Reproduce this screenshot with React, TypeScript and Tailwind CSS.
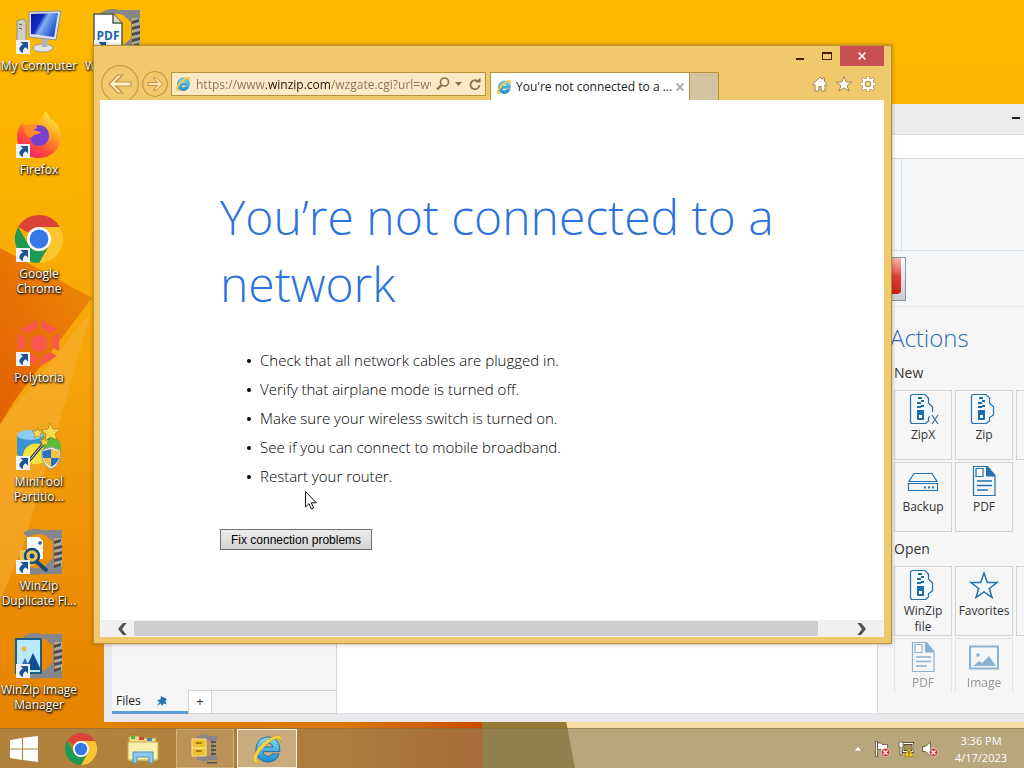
import { useState } from 'react'
import type { ReactNode } from 'react'

/* ------------- logos and glyphs ------------- */

function IeLogo({ className }: { className?: string }) {
  return (
    <svg viewBox="0 0 32 32" className={className} aria-hidden="true">
      <defs>
        <linearGradient id="ieBlue" x1="0" y1="0" x2="0" y2="1">
          <stop offset="0" stopColor="#7fdcf7" />
          <stop offset="1" stopColor="#1c8fd0" />
        </linearGradient>
      </defs>
      <path
        d="M17 4C9.500 4 5 9.500 5 17s5 12 12 12c5.500 0 9.500-3 11-8h-7c-.8 1.500-2.200 2.300-4 2.300-3 0-4.800-2-4.900-4.700H28.700C29.600 10 24.500 4 17 4Zm-4.800 10c.4-2.600 2.200-4.300 4.800-4.300s4.400 1.700 4.700 4.300Z"
        fill="url(#ieBlue)" stroke="#1a6fa8" strokeWidth="1"
      />
      <path
        d="M4.500 29.500C-1 27 5 15.500 14 8.500 21 3 28.500.5 30 4c.6 1.400.2 3.500-.7 5.500.2-2.500-.2-3.700-1.800-4-3-.5-8.500 2.500-13.500 7.500C7 20 3.500 27 7 28.300c1 .4 2.300.2 3.700-.4-2.300 1.700-4.600 2.400-6.200 1.600Z"
        fill="#f8d342" stroke="#c99a18" strokeWidth=".5"
      />
    </svg>
  )
}

function ChromeLogo({ className }: { className?: string }) {
  return (
    <svg viewBox="0 0 48 48" className={className} aria-hidden="true">
      <path d="M3.200 12A24 24 0 0 1 44.800 12H24A12 12 0 0 0 13.600 18Z" fill="#db4437" />
      <path d="M44.800 12A24 24 0 0 1 24 48L34.400 30A12 12 0 0 0 24 12Z" fill="#fbc52d" />
      <path d="M24 48A24 24 0 0 1 3.200 12L13.600 30A12 12 0 0 0 34.400 30Z" fill="#1e9a55" />
      <circle cx="24" cy="24" r="12" fill="#fff" />
      <circle cx="24" cy="24" r="9.400" fill="#3579e8" />
    </svg>
  )
}

function ComputerIcon() {
  return (
    <svg viewBox="0 0 48 48" className="size-12" aria-hidden="true">
      <defs>
        <linearGradient id="screen" x1="0" y1="0" x2="1" y2=".5">
          <stop offset="0" stopColor="#0a1a9c" />
          <stop offset=".4" stopColor="#0f2cc0" />
          <stop offset=".55" stopColor="#7fb0f2" />
          <stop offset="1" stopColor="#1d4fc9" />
        </linearGradient>
      </defs>
      <path d="M2 14l5-2 4 2v22l-5 3-4-3Z" fill="#cfcfca" stroke="#8e8e88" />
      <path d="M4 17l3 1M4 21l3 1" stroke="#555" />
      <ellipse cx="28" cy="41" rx="10" ry="4" fill="#e4e4e4" stroke="#9a9a9a" />
      <path d="M26 30h8l-2 10h-5Z" fill="#b5b5b5" />
      <path d="M14 5l32-1-5 29-27-3Z" fill="#dfe2e8" stroke="#8b8f99" />
      <path d="M16 7l27-1-4 24-23-3Z" fill="url(#screen)" />
    </svg>
  )
}

function FirefoxIcon() {
  return (
    <svg viewBox="0 0 48 48" className="size-12" aria-hidden="true">
      <defs>
        <linearGradient id="fox" x1=".8" y1="0" x2=".2" y2="1">
          <stop offset="0" stopColor="#fff24a" />
          <stop offset=".35" stopColor="#ffa91f" />
          <stop offset=".7" stopColor="#ff4a3d" />
          <stop offset="1" stopColor="#e2177a" />
        </linearGradient>
      </defs>
      <path
        d="M30 0c3 3 5 6 6 9 2-1 3 0 4 2 4 4 6 10 6 15 0 12-10 21-22 21S2 38 2 26c0-6 2-11 6-15l1 5c1-1 3-2 5-2 5-1 8-2 11-5 2-3 4-6 5-9Z"
        fill="url(#fox)"
      />
      <path d="M15 20c2-5 8-7 13-5 4 2 6 6 6 10 0 6-5 10-10 10s-8-3-9-8Z" fill="#7a3fd3" />
      <path d="M9 15c4-2 9-2 13 1 1 1-2 2-4 3 3 1 7 1 8 3-2 1-6 1-8 3-2 3-6 1-7-2-2-2-2-5-2-8Z" fill="#ff8a2a" />
    </svg>
  )
}

function PolytoriaIcon() {
  return (
    <svg viewBox="0 0 48 48" className="size-12" aria-hidden="true" fill="#f9584e">
      <path d="M24 15l8 4v10l-8 5-8-5V19Z" />
      <path d="M22 1v8l-9 5-7-4ZM26 1l16 9-7 4-9-5ZM44 14v18l-7-4V18ZM42 37l-16 10v-9l9-5ZM22 47L6 37l7-4 9 5ZM3 32V14l7 4v10Z" />
    </svg>
  )
}

function MiniToolIcon() {
  return (
    <svg viewBox="0 0 48 48" className="size-12" aria-hidden="true">
      <path d="M2 13c0-7 27-9 27 0v17c0 6-27 7-27 0Z" fill="#3b93cf" />
      <ellipse cx="15" cy="12" rx="13" ry="5" fill="#8ecdf0" />
      <path d="M9 28c4-8 14-10 23-4l-2 14c-8 6-17 3-23-3Z" fill="#f1e33a" />
      <path d="M26 15c9-4 20 0 20 9v6l-18-4Z" fill="#5dbb3b" />
      <path d="M13 39L34 14" stroke="#27303c" strokeWidth="3" />
      <path d="M13 39L34 14" stroke="#d9e1ea" strokeWidth="1" />
      <path d="M35 0l3 6 7 0-5 5 2 6-6-3-6 4 1-7-5-4 7-1ZM23 5l1 3 4 0-3 3 1 4-3-2-4 2 1-4-3-3h4ZM30 14l1 3 3 0-2 2 1 3-3-1-3 2 0-4-2-2h3Z" fill="#f9d94d" stroke="#a8841a" strokeWidth=".7" />
      <path d="M36 24l9 3c1 10-2 16-9 19-7-3-10-9-9-19Z" fill="#f3f3ee" stroke="#8e9ba5" />
      <path d="M36 26v9h-8c-1-3-1-5 0-7ZM36 35h8c-1 4-4 7-8 9Z" fill="#2c6fc4" />
      <path d="M36 26l8 2v7h-8ZM28 35h8v9c-4-2-7-5-8-9Z" fill="#efc53c" />
    </svg>
  )
}

/* grey clamp with a zip strip, shared by all WinZip icons */
function ZipClamp({ children }: { children?: ReactNode }) {
  return (
    <svg viewBox="0 0 48 48" className="size-12" aria-hidden="true">
      <path d="M8 6c5-4 12-5 18-3h21v8h-8v28h8v8H26c-6 2-13 0-18-3l5-5c6 3 12 3 17 0l8-8V15l-8-7c-5-2-11-1-17 2Z" fill="#85878b" />
      <path d="M40 11h7v29h-7Z" fill="#a9abad" />
      <path d="M39 14l7-2v3l-7 2ZM39 20l8-2v3l-8 2ZM39 26l8-2v3l-8 2ZM39 32l8-2v3l-8 2ZM39 38l7-2v3l-7 2Z" fill="#4b4d50" />
      {children}
    </svg>
  )
}

function PdfIcon() {
  return (
    <ZipClamp>
      <path d="M1 7h19l9 9v31H1Z" fill="#fff" stroke="#555b50" strokeWidth="1.500" />
      <path d="M20 7v9h9" fill="#d9dccf" stroke="#555b50" strokeWidth="1.500" />
      <text x="15" y="33" textAnchor="middle" fontSize="12" fontWeight="700" fill="#1a67a8" fontFamily="Open Sans, sans-serif">PDF</text>
    </ZipClamp>
  )
}

function DuplicateIcon() {
  return (
    <ZipClamp>
      <path d="M5 23h14v16H5Z" fill="#e3bf5a" />
      <path d="M12 10h12l4 4v18H12Z" fill="#f8fafc" />
      <circle cx="25" cy="16" r="1.800" fill="#1c5c96" />
      <circle cx="17" cy="29" r="7" fill="#e7c15a" stroke="#174a7c" strokeWidth="2.500" />
      <circle cx="17" cy="29" r="2.500" fill="#174a7c" />
      <path d="M22 35l9 8" stroke="#174a7c" strokeWidth="4" strokeLinecap="round" />
    </ZipClamp>
  )
}

function ImageManagerIcon() {
  return (
    <ZipClamp>
      <path d="M1 8h25v34H1Z" fill="#b9e9fb" stroke="#1b5d85" strokeWidth="2" />
      <circle cx="9" cy="18" r="2.500" fill="#f3b24a" />
      <path d="M10 39l8-17 8 17Z" fill="#0f4f93" />
      <path d="M4 39l6-12 6 12Z" fill="#3768b3" />
    </ZipClamp>
  )
}

function ZipFileGlyph({ x }: { x?: boolean }) {
  return (
    <svg viewBox="0 0 32 32" className="size-8" aria-hidden="true">
      <path d="M3.500 4c0-1.500.5-2.500 2-2.500H18l3.500 3.500v5l4 4v8l-4 2.500v3.500l-3 2.500H5.500c-1.500 0-2-.8-2-2.500Z" fill="#f7fafc" stroke="#2471ad" strokeWidth="1.200" />
      <path d="M11 4h4v2h-4ZM14 7h3v2h-3ZM10 9h4v2h-4ZM14 12h3v2h-3ZM10 13h4v2h-4Z" fill="#1c6dac" />
      <path d="M10 17h7v10h-7Zm2 5v3h3v-3Z" fill="#1c6dac" fillRule="evenodd" />
      {x && (
        <>
          <path d="M23 19h9v13h-9Z" fill="#f6f6f7" />
          <path d="M25 22l6 9M31 22l-6 9" stroke="#3b6f9b" strokeWidth="1.200" />
        </>
      )}
    </svg>
  )
}

function BackupGlyph() {
  return (
    <svg viewBox="0 0 32 32" className="size-8" fill="none" stroke="#2471ad" strokeWidth="1.200" aria-hidden="true">
      <path d="M7 8.500h18l5 8H2ZM1.500 18.500h29v7h-29Z" />
      <path d="M17 22.500h2M21 22.500h2M25 22.500h2" strokeWidth="2" />
    </svg>
  )
}

function DocGlyph() {
  return (
    <svg viewBox="0 0 32 32" className="size-8" aria-hidden="true">
      <path d="M5.500 1.500h14l7.500 9v20H5.500Z" fill="none" stroke="#2471ad" strokeWidth="1.200" />
      <path d="M8 3.500h7v8H8Z" fill="#fff" stroke="#2471ad" strokeWidth="1.200" />
      <path d="M18 2h1.500l7.500 8.500v1h-9Z" fill="#2471ad" />
      <path d="M9 16h15M9 20.500h15M9 25h11" stroke="#2471ad" strokeWidth="1.600" />
    </svg>
  )
}

function StarGlyph() {
  return (
    <svg viewBox="0 0 32 32" className="size-8" fill="none" stroke="#2471ad" strokeWidth="1.500" aria-hidden="true">
      <path d="M16 4l3.300 9.500H29l-7.700 6L24 28.500 16 23l-8 5.500 2.700-9-7.700-6h9.700Z" />
    </svg>
  )
}

function ImageGlyph() {
  return (
    <svg viewBox="0 0 32 32" className="size-8" aria-hidden="true">
      <path d="M2 5.500h28v22H2Z" fill="none" stroke="#2471ad" strokeWidth="2" />
      <circle cx="10" cy="14" r="1.800" fill="#2471ad" />
      <path d="M5 25l6-5 3 2 7-7 7 10Z" fill="#2471ad" />
    </svg>
  )
}

/* ------------- desktop ------------- */

const shortcuts = [
  { label: 'My Computer', icon: <ComputerIcon /> },
  { label: 'Firefox', icon: <FirefoxIcon /> },
  { label: 'Google Chrome', icon: <ChromeLogo className="size-12" /> },
  { label: 'Polytoria', icon: <PolytoriaIcon /> },
  { label: 'MiniTool Partitio...', icon: <MiniToolIcon /> },
  { label: 'WinZip Duplicate Fi...', icon: <DuplicateIcon /> },
  { label: 'WinZip Image Manager', icon: <ImageManagerIcon /> },
]

function Shortcut({ label, icon }: { label: string; icon: ReactNode }) {
  return (
    <button type="button" className="flex h-[104px] w-[78px] flex-col items-center pt-[7px] text-[12px] leading-[15px] text-white">
      <span className="relative">
        {icon}
        <svg viewBox="0 0 14 14" className="absolute bottom-px left-px size-3.5" aria-hidden="true">
          <path d="M0 0h14v14H0Z" fill="#eef3f8" />
          <path d="M4.500 2H12v7.500L9.500 7.200C7.500 8.500 6.500 10 7 13 2 11 2.500 6.500 7 4.500Z" fill="#1f5294" />
        </svg>
      </span>
      <span className="mt-[3px] w-20 text-center [text-shadow:1px_1px_2px_#000,0_1px_2px_#000]">{label}</span>
    </button>
  )
}

function Wallpaper() {
  return (
    <svg viewBox="0 0 1024 768" preserveAspectRatio="none" className="absolute inset-0 h-full w-full" aria-hidden="true">
      <defs>
        <linearGradient id="sky" x1="0" y1="0" x2="0" y2="1">
          <stop offset="0" stopColor="#fdba00" />
          <stop offset=".25" stopColor="#fcb100" />
          <stop offset=".5" stopColor="#f5a20c" />
          <stop offset=".75" stopColor="#ec8f03" />
          <stop offset="1" stopColor="#e28000" />
        </linearGradient>
        <linearGradient id="facet" x1="1" y1="0" x2="0" y2="1">
          <stop offset="0" stopColor="#ee8a08" />
          <stop offset="1" stopColor="#e26000" />
        </linearGradient>
        <linearGradient id="ridge" x1="0" y1="0" x2="1" y2="0">
          <stop offset="0" stopColor="#e28000" />
          <stop offset=".6" stopColor="#dc7800" />
          <stop offset="1" stopColor="#cc4c00" />
        </linearGradient>
      </defs>
      <path d="M0 0h1024v768H0Z" fill="url(#sky)" />
      <path d="M0 248l92 50L15 400 0 424Z" fill="url(#facet)" />
      <path d="M92 310L22 550 0 600V425Z" fill="#f8b23a" opacity=".5" />
      <path d="M112 700h370v68H112Z" fill="url(#ridge)" />
      <path d="M482 700h82l11 68h-93Z" fill="#977a32" />
      <path d="M562 700h462v68H575Z" fill="#f7dca6" />
    </svg>
  )
}

/* ------------- WinZip, behind the browser ------------- */

function Tile({ label, icon, faded }: { label?: string; icon?: ReactNode; faded?: boolean }) {
  return (
    <button
      type="button"
      className={`flex h-[70px] w-[58px] shrink-0 flex-col items-center border border-[#d2d3d5] pt-0.5 text-[12px] leading-4 text-[#333] ${faded ? 'opacity-50' : ''}`}
    >
      {icon}
      <span className="mt-0.5">{label}</span>
    </button>
  )
}

function WinZipWindow() {
  return (
    <section aria-label="WinZip" className="absolute top-[104px] right-0 bottom-1.5 left-[104px] flex flex-col overflow-hidden bg-[#ebe8ec] pb-2 pl-2">
      <div className="-ml-2 flex h-[30px] shrink-0 items-start justify-end bg-[#ececec]">
        <button type="button" aria-label="Minimize WinZip" className="flex h-7 w-4 items-center justify-center">
          <span className="h-0.5 w-2 bg-[#222]" />
        </button>
      </div>
      <div className="h-[25px] shrink-0 border-y border-[#d9dbde] bg-white" />
      <div className="flex h-[92px] shrink-0 justify-end border-b border-[#dcdfe3] bg-[#f4f6f8]">
        <div className="w-[123px] border-l border-[#dcdfe3]" />
      </div>
      <div className="flex h-14 shrink-0 items-start justify-end border-b border-[#e9e9ea] bg-[#f5f6f7] pt-1.5 pr-[118px]">
        <div className="flex h-[44px] w-8 justify-end border border-[#8f9296] bg-linear-to-b from-white to-[#c9cbce] pr-1">
          <div className="h-9 w-6 rounded-br-sm bg-linear-to-b from-[#f3b9b6] via-[#e0403a] to-[#c9201c]" />
        </div>
      </div>

      <div className="flex min-h-0 flex-1">
        <div className="flex w-[225px] flex-col justify-end border-r border-[#d2d3d5] bg-[#f5f5f6]">
          <div className="flex h-6 text-[12px] text-[#222]">
            <button type="button" className="flex w-[76px] items-center gap-4 border-b-3 border-[#5b9bd5] pl-1">
              Files
              <svg viewBox="0 0 12 12" className="size-2.5" aria-hidden="true">
                <path d="M4.500 0L12 3.500l-2 2.500 1.500 4L8 9 6 12 4.500 9 0 12l3-4.500L0 5l4.500-1Z" fill="#1f77b4" />
              </svg>
            </button>
            <button type="button" aria-label="Add pane" className="w-6 border border-[#d2d3d5] bg-white text-center">+</button>
            <div className="flex-1 border-y border-[#d2d3d5]" />
          </div>
        </div>
        <div className="flex-1 border-b border-[#dcdfe3] bg-white" />
        <div className="w-[147px] overflow-hidden border-b border-l border-[#d9dbde] bg-[#f6f6f7] pt-3">
          <h2 className="pl-3 text-[24px] leading-[38px] text-[#2f6db5] font-light">Actions</h2>
          <div className="h-[336px] overflow-hidden pt-1.5 pl-4">
            <h3 className="h-[27px] text-[14px] leading-[20px] font-medium text-[#333]">New</h3>
            <div className="flex flex-col gap-0.5">
              <div className="flex gap-[3px]">
                <Tile label="ZipX" icon={<ZipFileGlyph x />} />
                <Tile label="Zip" icon={<ZipFileGlyph />} />
                <Tile />
              </div>
              <div className="flex gap-[3px]">
                <Tile label="Backup" icon={<BackupGlyph />} />
                <Tile label="PDF" icon={<DocGlyph />} />
              </div>
            </div>
            <h3 className="h-[34px] pt-[7px] text-[14px] leading-[20px] font-medium text-[#333]">Open</h3>
            <div className="flex flex-col gap-0.5">
              <div className="flex gap-[3px]">
                <Tile label="WinZip file" icon={<ZipFileGlyph />} />
                <Tile label="Favorites" icon={<StarGlyph />} />
                <Tile />
              </div>
              <div className="flex gap-[3px]">
                <Tile label="PDF" icon={<DocGlyph />} faded />
                <Tile label="Image" icon={<ImageGlyph />} faded />
              </div>
            </div>
          </div>
        </div>
      </div>
    </section>
  )
}

/* ------------- Internet Explorer ------------- */

const tips = [
  'Check that all network cables are plugged in.',
  'Verify that airplane mode is turned off.',
  'Make sure your wireless switch is turned on.',
  'See if you can connect to mobile broadband.',
  'Restart your router.',
]

function BrowserWindow() {
  const [url, setUrl] = useState('https://www.winzip.com/wzgate.cgi?url=www.winzip.com')

  return (
    <section
      aria-label="Internet Explorer"
      className="absolute top-[45px] right-[132px] bottom-[84px] left-[93px] flex flex-col border border-[#b98f3c] bg-[#efc96c] pr-[7px] pb-1.5 pl-1.5 shadow-[0_0_4px_rgba(60,40,0,0.4)]"
    >
      {/* caption */}
      <div className="flex h-5 shrink-0 justify-end">
        <button type="button" aria-label="Minimize" className="flex w-[27px] items-center justify-center pt-1.5">
          <span className="h-0.5 w-2 bg-[#40200a]" />
        </button>
        <button type="button" aria-label="Maximize" className="flex w-[27px] items-center justify-center">
          <span className="h-2 w-2.5 border border-t-2 border-[#40200a]" />
        </button>
        <button type="button" aria-label="Close" className="flex w-11 items-center justify-center bg-[#c75050]">
          <svg viewBox="0 0 8 8" className="size-2" stroke="#fff" strokeWidth="1.500" aria-hidden="true">
            <path d="M.5.5l7 7M7.500.5l-7 7" />
          </svg>
        </button>
      </div>

      {/* navigation */}
      <div className="flex h-[34px] shrink-0 items-center pt-0.5 pl-px">
        <button type="button" aria-label="Back" className="size-[38px] shrink-0">
          <svg viewBox="0 0 38 38" className="size-[38px]" aria-hidden="true">
            <circle cx="19" cy="19" r="18.300" fill="none" stroke="#c79a3e" strokeWidth="1.200" />
            <path d="M8 19l9-9h4.500l-7 7H30v4H14.500l7 7H17Z" fill="#fff0d2" stroke="#c0903a" strokeWidth="1.200" />
          </svg>
        </button>
        <button type="button" aria-label="Forward" className="mx-[3px] size-[26px] shrink-0">
          <svg viewBox="0 0 26 26" className="size-[26px]" aria-hidden="true">
            <circle cx="13" cy="13" r="12.300" fill="none" stroke="#c79a3e" strokeWidth="1.200" />
            <path d="M20.500 13l-6 6h-3l4-4.500H6v-3h9.500l-4-4.500h3Z" fill="#fce5b8" stroke="#c0903a" />
          </svg>
        </button>
        <form className="flex h-6 min-w-0 flex-1 items-center border border-[#b9923f] bg-[#fde9c6] pl-[3px]" onSubmit={e => e.preventDefault()}>
          <IeLogo className="mr-[5px] size-4 shrink-0" />
          {/* the host part of the address is drawn darker than the rest */}
          <input
            aria-label="Address"
            value={url}
            onChange={e => setUrl(e.target.value)}
            className="min-w-0 flex-1 bg-[linear-gradient(90deg,#85745a_70px,#1c140a_70px,#1c140a_134px,#85745a_134px)] bg-clip-text pt-0.5 text-[12px] text-transparent outline-none"
          />
          <button type="button" aria-label="Search" className="ml-1 w-4">
            <svg viewBox="0 0 16 16" className="size-4" fill="none" stroke="#8a7048" strokeWidth="1.600" aria-hidden="true">
              <circle cx="9.500" cy="6" r="4" />
              <path d="M6.500 9L2 13.500" strokeWidth="2.400" />
            </svg>
          </button>
          <button type="button" aria-label="Show address list" className="flex w-4 justify-center">
            <svg viewBox="0 0 8 4" className="h-1 w-2" aria-hidden="true"><path d="M0 0h7L3.500 4Z" fill="#8a7048" /></svg>
          </button>
          <button type="button" aria-label="Refresh" className="mr-0.5 w-4">
            <svg viewBox="0 0 16 16" className="size-4" aria-hidden="true">
              <path d="M12.500 9A4.500 4.500 0 1 1 10.500 5" fill="none" stroke="#8a7048" strokeWidth="1.800" />
              <path d="M8.500 6.500h5v-5Z" fill="#8a7048" />
            </svg>
          </button>
        </form>
        <div className="ml-1 flex h-7 w-[200px] shrink-0 items-center self-end border border-b-0 border-[#b9923f] bg-white px-[5px]">
          <IeLogo className="mr-1 size-4 shrink-0" />
          <span className="flex-1 text-[12px] whitespace-nowrap text-[#222]">You're not connected to a ...</span>
          <button type="button" aria-label="Close tab" className="flex w-2 items-center justify-center">
            <svg viewBox="0 0 8 8" className="size-2" stroke="#a5a5a5" strokeWidth="1.800" aria-hidden="true">
              <path d="M.5.5l7 7M7.500.5l-7 7" />
            </svg>
          </button>
        </div>
        <button type="button" aria-label="New tab" className="h-7 w-[29px] shrink-0 self-end border border-b-0 border-l-0 border-[#b9923f] bg-[#d4c3a0]" />
        <div className="flex w-[165px] shrink-0 justify-end gap-2 pr-2 text-[#8d7140]">
          <button type="button" aria-label="Home">
            <svg viewBox="0 0 16 16" className="size-4" fill="#fffdf6" stroke="currentColor" strokeWidth=".8" aria-hidden="true">
              <path d="M8 1L.8 8.300 2 9.500l1-1V15h3.800v-4.500h2.400V15H13V8.500l1 1 1.200-1.200-2.700-2.800V2h-2v1.500Z" />
            </svg>
          </button>
          <button type="button" aria-label="Favorites">
            <svg viewBox="0 0 16 16" className="size-4" fill="#fffdf6" stroke="currentColor" strokeWidth=".8" aria-hidden="true">
              <path d="M8 .6l2 5.200 5.500.2-4.300 3.400 1.500 5.400L8 11.800l-4.700 3 1.500-5.400L.5 6 6 5.800Z" />
            </svg>
          </button>
          <button type="button" aria-label="Tools">
            <svg viewBox="0 0 16 16" className="size-4" aria-hidden="true">
              <path d="M8 0v16M0 8h16M2.300 2.300l11.400 11.400M13.700 2.300L2.300 13.700" stroke="#a5854a" strokeWidth="3.600" />
              <circle cx="8" cy="8" r="6" fill="#fffdf6" stroke="#a5854a" strokeWidth=".8" />
              <path d="M8 .5v15M.5 8h15M2.700 2.700l10.600 10.600M13.300 2.700L2.700 13.300" stroke="#fffdf6" strokeWidth="2.600" />
              <circle cx="8" cy="8" r="2.800" fill="#efc96c" stroke="#8d7140" strokeWidth=".8" />
              <circle cx="8" cy="8" r="1" fill="#fffdf6" />
            </svg>
          </button>
        </div>
      </div>

      {/* page */}
      <div className="relative flex min-h-0 flex-1 flex-col bg-white">
        <main className="min-h-0 flex-1 overflow-hidden pt-[83px] pl-[120px] text-black">
          <h1 className="max-w-[600px] text-[48px] leading-[67px] font-light text-[#2a72de]">You’re not connected to a network</h1>
          <ul className="mt-[29px] ml-[27px] text-[15px] leading-[29px] font-light">
            {tips.map(tip => (
              <li key={tip} className="flex items-center gap-[9px]">
                <span className="size-1 rounded-full bg-black" />
                {tip}
              </li>
            ))}
          </ul>
          <button
            type="button"
            className="mt-[38px] h-[21px] border border-[#707070] bg-linear-to-b from-[#ececec] to-[#d4d4d4] px-2.5 font-['Liberation_Sans',sans-serif] text-[12px] leading-none"
          >
            Fix connection problems
          </button>
        </main>
        <div className="flex h-[17px] shrink-0 items-center bg-[#f0f0f0]">
          <button type="button" aria-label="Scroll left" className="flex w-[34px] justify-center pl-2.5">
            <svg viewBox="0 0 10 12" className="h-3 w-2.5" aria-hidden="true"><path d="M6 0h3.500L5 6l4.500 6H6L1 6Z" fill="#4d5154" /></svg>
          </button>
          <div className="h-[15px] flex-1 bg-[#cdcdcd]" />
          <button type="button" aria-label="Scroll right" className="flex w-[66px] justify-center pl-[22px]">
            <svg viewBox="0 0 10 12" className="h-3 w-2.5" aria-hidden="true"><path d="M4 0H.5L5 6 .5 12H4l5-6Z" fill="#4d5154" /></svg>
          </button>
        </div>
      </div>
    </section>
  )
}

/* ------------- taskbar ------------- */

function RedCross() {
  return (
    <>
      <circle cx="11.500" cy="11.500" r="4.300" fill="#d6373a" stroke="#fff" strokeWidth=".6" />
      <path d="M9.500 9.500l4 4M13.500 9.500l-4 4" stroke="#fff" strokeWidth="1.400" />
    </>
  )
}

function Taskbar() {
  return (
    <footer className="relative flex h-10 shrink-0 items-stretch border-t border-[#8c6a34]/60 bg-[#8d8262]/60 text-white">
      <button type="button" aria-label="Start" className="flex w-12 items-center justify-center">
        <svg viewBox="0 0 28 26" className="h-[26px] w-7" fill="#fff" aria-hidden="true">
          <path d="M0 4l12-2v10.500H0ZM13 1.800L28 0v12.500H13ZM0 13.500h12V24L0 22ZM13 13.500h15V26l-15-2Z" />
        </svg>
      </button>
      <button type="button" aria-label="Google Chrome" className="flex w-[66px] items-center justify-center">
        <ChromeLogo className="size-8" />
      </button>
      <button type="button" aria-label="File Explorer" className="flex w-[58px] items-center justify-center">
        <svg viewBox="0 0 32 32" className="size-8" aria-hidden="true">
          <path d="M2 5c0-2 1-2 2-2h7l2 2h16v23H2Z" fill="#f3dc84" stroke="#b99a45" />
          <path d="M4 3h4v3H4Z" fill="#4caf50" />
          <path d="M12 4h5v3h-5Z" fill="#c94a35" />
          <path d="M20 5h5v3h-5Z" fill="#4a7fc0" />
          <path d="M1 9h30v18H1Z" fill="#fbefad" stroke="#c7a956" />
          <path d="M6 30V19h20v11h-4v-6H10v6Z" fill="#8cc9ec" stroke="#4b94c6" />
        </svg>
      </button>
      <button type="button" aria-label="WinZip" className="ml-1 flex w-[58px] items-center justify-center border border-[#ddc396]/60 bg-white/15">
        <svg viewBox="0 0 32 32" className="size-8" aria-hidden="true">
          <path d="M8 4c4-3 8-3 12-1h8v5h-3v15h3v4h-6c-5 2-10 2-14-1v-3h12l2-2V9l-3-2H8Z" fill="#8d8487" />
          <path d="M22 8h5v2h-5ZM22 12h5v2h-5ZM22 16h5v2h-5ZM22 20h5v2h-5ZM18 29h10v1.500H18Z" fill="#555" />
          <path d="M3 6h14v9H3ZM3 15h14v8H3Z" fill="#f0c033" stroke="#fbe48c" />
          <path d="M7 10h6M7 18h6" stroke="#8a6a10" strokeWidth="1.500" />
        </svg>
      </button>
      <button type="button" aria-label="Internet Explorer" className="ml-[3px] flex w-[60px] items-center justify-center border border-[#fdf3dd] bg-white/35">
        <IeLogo className="size-8" />
      </button>

      <div className="ml-auto flex items-center gap-2">
        <button type="button" aria-label="Show hidden icons" className="mr-1">
          <svg viewBox="0 0 8 5" className="h-[5px] w-2" aria-hidden="true"><path d="M4 0l4 5H0Z" fill="#fff" stroke="#6b5836" strokeWidth=".4" /></svg>
        </button>
        <button type="button" aria-label="Action Center">
          <svg viewBox="0 0 16 16" className="size-4" aria-hidden="true">
            <path d="M1.500.5h2v15h-2ZM3.500 2h4l1 1.500h5V10H8L7 8.500H3.500Z" fill="#fff" stroke="#5b4a2c" strokeWidth=".8" />
            <RedCross />
          </svg>
        </button>
        <button type="button" aria-label="Network">
          <svg viewBox="0 0 16 16" className="size-4" aria-hidden="true">
            <path d="M5 2.500h10v8H5Z" fill="#a8905c" stroke="#3d3320" strokeWidth="2.400" />
            <path d="M5 2.500h10v8H5Z" fill="none" stroke="#fff" />
            <path d="M1 1h4v5H4v8H2V6H1Z" fill="#fff" stroke="#5b4a2c" strokeWidth=".8" />
            <path d="M11 7l4.500 8.500h-9Z" fill="#f6cf2b" stroke="#9a7a10" strokeWidth=".6" />
            <path d="M11 10v3M11 13.700v1" stroke="#3a2f10" />
          </svg>
        </button>
        <button type="button" aria-label="Volume">
          <svg viewBox="0 0 16 16" className="size-4" aria-hidden="true">
            <path d="M.5 5.500h3l5-4.500v14l-5-4.500h-3Z" fill="#fff" stroke="#5b4a2c" strokeWidth=".8" />
            <RedCross />
          </svg>
        </button>
        <div className="w-[78px] pr-2 text-center text-[11px] leading-[17px]">
          <div>3:36 PM</div>
          <div>4/17/2023</div>
        </div>
      </div>
    </footer>
  )
}

export default function App() {
  return (
    <div className="relative flex h-screen flex-col overflow-hidden font-['Open_Sans',sans-serif] select-none">
      <Wallpaper />
      <div className="relative min-h-0 flex-1 overflow-hidden">
        <nav aria-label="Desktop" className="flex items-start">
          <div className="flex flex-col">
            {shortcuts.map(s => <Shortcut key={s.label} {...s} />)}
          </div>
          <Shortcut label="WinZip PDF" icon={<PdfIcon />} />
        </nav>
        <WinZipWindow />
        <BrowserWindow />
        {/* mouse pointer */}
        <svg viewBox="0 0 12 19" className="absolute top-[491px] left-[305px] h-[19px] w-3" aria-hidden="true">
          <path d="M.5.5v15.500l3.500-3.300 2.300 5.300 2.300-1-2.300-5.200h5Z" fill="#fff" stroke="#111" />
        </svg>
      </div>
      <Taskbar />
    </div>
  )
}
